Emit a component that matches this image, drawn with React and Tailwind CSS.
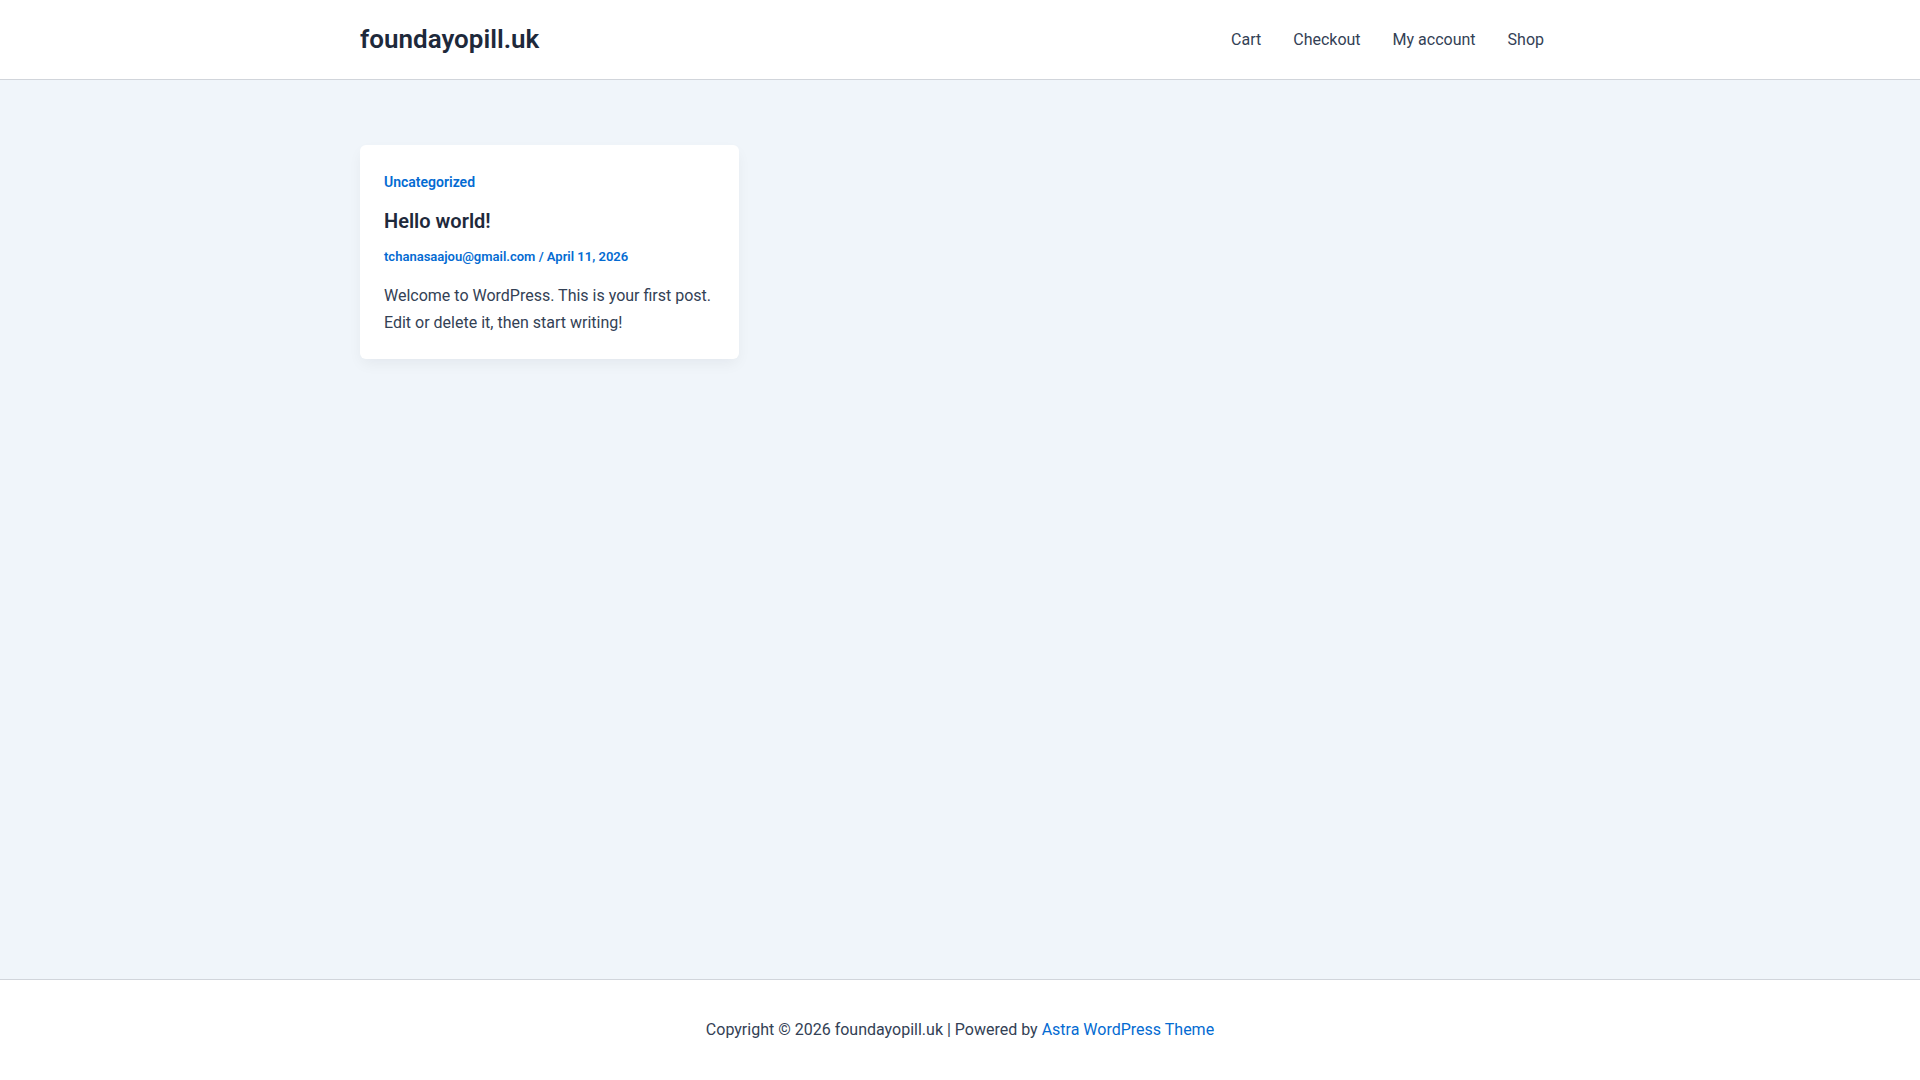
export default function App() {
  const nav = ["Cart", "Checkout", "My account", "Shop"];

  return (
    <div className="min-h-screen flex flex-col bg-[#f0f5fa] font-['Roboto',sans-serif] text-[#334155]">
      {/* header */}
      <header className="bg-white border-b border-[#d1d5db]">
        <div className="w-[1200px] mx-auto h-[79px] flex items-center justify-between">
          <a className="text-[26px] font-semibold text-[#1e293b] leading-none -mt-[2px]">foundayopill.uk</a>
          <nav className="flex items-center">
            {nav.map((item) => (
              <a key={item} className="px-4 text-base text-[#334155]">
                {item}
              </a>
            ))}
          </nav>
        </div>
      </header>

      {/* main */}
      <main className="flex-1">
        <div className="w-[1200px] mx-auto pt-[65px] grid grid-cols-3 gap-[32px]">
          <article className="bg-white rounded-md px-6 pt-[26px] pb-[23px] shadow-[0_6px_15px_-2px_rgba(16,24,40,0.06)]">
            <a className="block text-[14px] font-semibold text-[#046bd2] leading-[22px]">Uncategorized</a>
            <h2 className="mt-[14px] text-[20px] font-semibold text-[#1e293b] leading-7">Hello world!</h2>
            <div className="mt-[12px] text-[13px] font-semibold text-[#046bd2] leading-5">
              <a>tchanasaajou@gmail.com</a> / <a>April 11, 2026</a>
            </div>
            <p className="mt-[16px] text-base leading-[26.5px]">
              Welcome to WordPress. This is your first post. Edit or delete it, then start writing!
            </p>
          </article>
        </div>
      </main>

      {/* footer */}
      <footer className="bg-white border-t border-[#d1d5db] h-[101px] flex items-center justify-center">
        <p className="text-base">
          Copyright © 2026 foundayopill.uk | Powered by <a className="text-[#046bd2]">Astra WordPress Theme</a>
        </p>
      </footer>
    </div>
  );
}
